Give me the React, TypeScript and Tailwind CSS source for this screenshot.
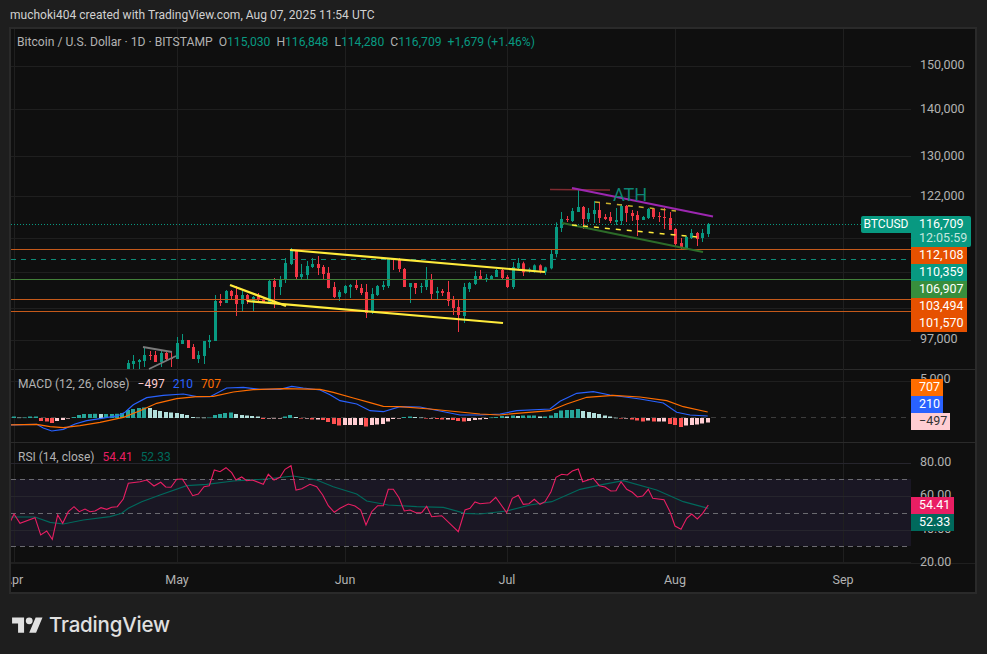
import * as React from "react"

type Candle = [number, number, number, number, number, "g" | "r"]

const UP = "#089981"
const DOWN = "#f23645"

// numbers read off 3x crops: [x, high, bodyTop, bodyBottom, low, colour]
const LEFT: Candle[] = [
  [385, 390, 399, 417, 417, "g"], [400, 375, 393, 402, 417, "g"], [418, 387, 390, 396, 417, "g"], [433, 352, 375, 393, 411, "g"],
  [451, 363, 375, 378, 390, "r"], [466, 363, 375, 396, 396, "r"], [484, 360, 369, 396, 411, "g"], [499, 363, 369, 387, 393, "r"],
  [514, 363, 384, 387, 411, "r"], [532, 321, 339, 387, 387, "g"], [547, 312, 330, 342, 342, "g"], [565, 330, 330, 354, 354, "r"],
  [580, 342, 351, 387, 387, "r"], [595, 363, 375, 387, 399, "g"], [613, 333, 333, 378, 402, "g"], [628, 315, 330, 336, 354, "g"],
  [646, 195, 213, 333, 333, "g"], [661, 192, 213, 219, 228, "r"], [679, 180, 183, 219, 219, "g"], [694, 180, 183, 198, 207, "r"],
  [709, 168, 195, 222, 258, "r"], [727, 180, 195, 222, 246, "g"], [742, 192, 195, 213, 222, "r"], [760, 198, 201, 213, 246, "g"],
  [775, 189, 198, 207, 213, "r"], [790, 204, 207, 216, 219, "r"], [808, 150, 153, 216, 216, "g"], [823, 144, 153, 171, 234, "r"],
  [841, 138, 150, 171, 195, "g"], [856, 84, 99, 150, 159, "g"], [874, 54, 60, 102, 105, "g"], [889, 60, 63, 141, 148, "r"],
  [904, 102, 132, 141, 148, "g"], [922, 93, 108, 135, 148, "g"], [937, 84, 102, 111, 114, "g"], [955, 78, 102, 114, 135, "r"],
]

const MIDDLE: Candle[] = [
  [10, 105, 111, 132, 148, "r"], [25, 111, 129, 174, 175, "r"], [43, 156, 171, 201, 204, "r"], [58, 180, 186, 201, 213, "g"],
  [76, 165, 168, 189, 192, "g"], [91, 162, 165, 171, 204, "g"], [109, 150, 165, 174, 180, "r"], [124, 162, 174, 189, 195, "r"],
  [139, 162, 186, 249, 264, "r"], [157, 174, 192, 246, 252, "g"], [172, 165, 168, 195, 198, "g"], [190, 153, 165, 171, 180, "g"],
  [205, 84, 84, 168, 174, "g"], [220, 84, 84, 90, 120, "r"], [238, 84, 87, 117, 126, "r"], [253, 114, 117, 171, 171, "r"],
  [271, 159, 159, 171, 219, "g"], [286, 159, 159, 174, 192, "r"], [304, 159, 168, 171, 189, "g"], [319, 111, 150, 171, 180, "g"],
  [334, 132, 150, 192, 207, "r"], [352, 171, 183, 189, 207, "g"], [367, 177, 183, 189, 198, "r"], [385, 153, 186, 213, 228, "r"],
  [400, 198, 207, 234, 255, "r"], [415, 210, 231, 255, 306, "r"], [433, 159, 171, 258, 279, "g"], [448, 156, 159, 177, 186, "g"],
  [466, 123, 138, 162, 165, "g"], [481, 120, 138, 150, 150, "r"], [499, 132, 144, 147, 156, "g"], [514, 135, 138, 147, 150, "g"],
  [529, 117, 120, 141, 141, "g"], [547, 114, 120, 144, 150, "r"], [562, 135, 141, 171, 174, "r"], [580, 96, 111, 171, 177, "g"],
  [595, 84, 99, 114, 120, "g"],
]

const RIGHT: Candle[] = [
  [10, 275, 280, 307, 318, "r"], [28, 293, 298, 302, 308, "g"], [43, 283, 286, 302, 308, "g"], [61, 283, 286, 302, 310, "r"],
  [76, 290, 292, 305, 315, "g"], [94, 240, 252, 295, 298, "g"], [109, 157, 171, 252, 262, "g"], [124, 126, 147, 174, 186, "g"],
  [142, 138, 147, 150, 156, "r"], [157, 114, 123, 153, 156, "g"], [175, 57, 111, 126, 126, "g"], [190, 108, 111, 147, 177, "r"],
  [205, 114, 129, 147, 156, "g"], [223, 93, 120, 132, 159, "g"], [238, 96, 120, 144, 159, "r"], [256, 132, 141, 147, 150, "r"],
  [271, 126, 141, 153, 159, "r"], [289, 114, 150, 156, 165, "g"], [304, 102, 108, 153, 165, "g"], [319, 105, 108, 129, 156, "r"],
  [337, 120, 129, 138, 153, "r"], [352, 123, 135, 150, 198, "r"], [370, 138, 141, 150, 150, "g"], [385, 114, 117, 144, 147, "g"],
  [400, 114, 117, 141, 147, "r"], [418, 126, 138, 141, 156, "r"], [433, 114, 141, 144, 177, "r"], [451, 126, 144, 180, 180, "r"],
  [466, 174, 177, 222, 228, "r"], [484, 204, 219, 234, 237, "r"], [499, 198, 201, 234, 240, "g"], [514, 177, 189, 204, 207, "g"],
  [532, 186, 189, 207, 228, "r"], [547, 177, 189, 204, 216, "g"], [565, 159, 162, 192, 201, "g"],
]

const HIST = [
  1.5, 0.5, 0.5, 1.5, 1.5, -3, -3.5, -5, -3, -2, -0.5, 1, 3, 4, 4, 4.2, 4, 4, 4, 4.2, 5, 8, 9, 10, 10.5, 10, 8, 7, 6, 5.5, 5, 4, 3, 1, 0.5, 0.4, 0.5,
  3, 4, 5, 5.5, 4, 3, 2.5, 2, 1.5, -1, -0.5, -0.5, -0.5, 1.5, 3, 1, -0.5, -0.5, -1.5, -1.5, -2, -4, -6, -7.5, -7, -7, -7, -7, -8.5, -7, -6.5, -6, -3.5, -1, -0.5,
  1, 1.5, 1, 0.5, -0.5, -0.5, -1, -1.5, -1.5, -2, -3, -3.5, -3, -2, -1.5, -1, 0.5, 1,
  2, 1.5, 2.5, 2, 2.5, 2.5, 2.5, 1.5, 1.5, 2.5, 5, 7.5, 8, 8, 9, 7, 6, 5, 4, 2.5, 1.5, 0.3, -0.5, -0.5, -1.5, -2.5, -3.5, -2.5, -3.5, -3.5, -3.5, -6, -7, -9, -7.5, -7, -6.5, -5.5, -4.5,
]

const pts = (list: number[][], ox: number, oy: number) =>
  list.map(([x, y]) => `${(ox + x / 3).toFixed(1)},${(oy + y / 3).toFixed(1)}`).join(" ")

const MACD_BLUE =
  pts([[30, 183], [110, 181], [130, 192], [155, 201], [190, 196], [225, 180], [260, 170], [300, 164], [355, 155], [375, 145], [400, 122], [440, 101], [490, 94], [550, 90], [590, 98], [630, 98], [680, 72], [730, 70], [780, 76], [840, 76], [875, 67], [910, 72], [960, 78], [990, 92], [1020, 110], [1070, 120], [1110, 140], [1150, 143], [1200, 128]], 0, 365) +
  " 420,408 440,412 460,416 480,416 " +
  pts([[0, 150], [50, 140], [150, 135], [180, 112], [230, 88], [280, 83], [330, 93], [420, 105], [490, 117], [530, 145], [570, 153], [623, 156]], 500, 365)

const MACD_ORANGE =
  pts([[30, 183], [110, 181], [150, 188], [190, 191], [240, 185], [300, 175], [370, 160], [420, 140], [470, 118], [530, 104], [590, 98], [640, 97], [700, 84], [760, 77], [850, 74], [960, 76], [1000, 85], [1060, 102], [1110, 116], [1150, 127], [1200, 128]], 0, 365) +
  " 430,410 460,413 480,415 " +
  pts([[0, 153], [50, 148], [150, 140], [200, 120], [260, 100], [340, 94], [420, 99], [500, 110], [550, 128], [623, 144]], 500, 365)

const RSI_PINK =
  pts([[30, 232], [42, 207], [60, 235], [105, 218], [122, 270], [140, 258], [157, 283], [173, 210], [188, 235], [205, 200], [222, 185], [238, 200], [255, 192], [270, 200], [285, 198], [303, 188], [320, 193], [335, 187], [352, 185], [370, 162], [385, 115], [420, 110], [440, 105], [462, 123], [482, 112], [497, 126], [513, 127], [530, 103], [547, 102], [562, 125], [578, 152], [595, 147], [612, 125], [628, 122], [643, 75], [660, 80], [678, 68], [695, 83], [708, 105], [725, 96], [740, 107], [757, 105], [790, 118], [805, 88], [822, 105], [840, 97], [855, 73], [873, 62], [888, 135], [905, 131], [930, 118], [950, 125], [968, 150], [985, 182], [1003, 202], [1020, 190], [1045, 177], [1065, 183], [1082, 195], [1098, 240], [1115, 200], [1133, 182], [1150, 182], [1165, 133], [1180, 133], [1197, 158], [1213, 198], [1230, 195], [1248, 203], [1265, 203], [1280, 184], [1295, 215], [1325, 212], [1375, 260], [1395, 195], [1410, 190], [1425, 171], [1440, 176]], 0, 445) +
  " " +
  pts([[30, 173], [47, 157], [80, 203], [97, 160], [115, 151], [130, 178], [147, 176], [163, 163], [180, 178], [195, 170], [213, 140], [228, 97], [245, 88], [262, 90], [277, 78], [295, 72], [308, 110], [340, 100], [358, 122], [375, 126], [392, 138], [408, 137], [423, 110], [440, 133], [457, 142], [472, 156], [488, 153], [505, 133], [518, 160], [552, 164], [570, 200], [585, 243], [603, 253], [620, 220], [635, 207], [652, 222], [668, 205], [685, 180]], 480, 445)

const RSI_GREEN =
  pts([[30, 216], [105, 216], [150, 232], [190, 237], [250, 225], [330, 215], [365, 205], [385, 190], [425, 170], [480, 150], [560, 122], [620, 118], [700, 108], [800, 102], [880, 93], [950, 105], [1000, 125], [1070, 147], [1100, 168], [1165, 180], [1250, 185], [1330, 187], [1395, 205], [1440, 207]], 0, 445) +
  " " +
  pts([[80, 198], [150, 180], [215, 170], [300, 133], [370, 118], [430, 107], [530, 135], [610, 170], [685, 190]], 480, 445)

function Candles({ data, ox, oy }: { data: Candle[]; ox: number; oy: number }) {
  return (
    <>
      {data.map(([x, h, t, b, l, c]) => {
        const px = Math.round(ox + x / 3) + 0.5
        const fill = c === "g" ? UP : DOWN
        return (
          <g key={x} fill={fill}>
            <rect x={px - 0.5} y={oy + h / 3} width={1} height={(l - h) / 3} />
            <rect x={px - 1.5} y={oy + t / 3} width={3} height={Math.max((b - t) / 3, 1)} />
          </g>
        )
      })}
    </>
  )
}

// vertical time grid, shared by the three panes
function TimeGrid({ y1, y2 }: { y1: number; y2: number }) {
  return (
    <>
      {[14.5, 177.5, 345.5, 507.5, 675.5, 843.5].map((x) => (
        <line key={x} x1={x} x2={x} y1={y1} y2={y2} stroke="#1f1f1f" />
      ))}
    </>
  )
}

function HLines({ ys, color = "#1f1f1f" }: { ys: number[]; color?: string }) {
  return (
    <>
      {ys.map((y) => (
        <line key={y} x1={11} x2={911} y1={y} y2={y} stroke={color} />
      ))}
    </>
  )
}

function Tag({ className, children }: { className: string; children: React.ReactNode }) {
  return <div className={`h-[17px] flex items-center pl-[8px] text-[12.5px] leading-none ${className}`}>{children}</div>
}

export default function App() {
  return (
    <div className="w-[987px] h-[654px] bg-[#1e1e1e] flex flex-col overflow-hidden font-['Roboto',sans-serif]">
      <div className="h-[27px] shrink-0 pl-[10px] pt-[7px] text-[12px] leading-4 tracking-[0.02px] text-[#d1d1d1]">
        muchoki404 created with TradingView.com, Aug 07, 2025 11:54 UTC
      </div>

      <div className="ml-[9px] w-[968px] h-[567px] shrink-0 border-2 border-[#2a2a2a] bg-[#0f0f0f] flex flex-col">
        {/* Main pane */}
        <div className="h-[341px] shrink-0 flex border-b border-[#2a2a2a]">
          <div className="relative w-[900px] shrink-0">
            <svg className="absolute inset-0" width={900} height={341} viewBox="11 29 900 341">
              <TimeGrid y1={29} y2={370} />
              <HLines ys={[66.5, 109.5, 156.5, 196.5, 238.5, 272.5, 308.5, 340.5]} />
              <Candles data={LEFT} ox={0} oy={230} />
              <Candles data={MIDDLE} ox={320} oy={230} />
              <Candles data={RIGHT} ox={520} oy={170} />

              <line x1={11} x2={861} y1={224.5} y2={224.5} stroke={UP} strokeDasharray="1 2" />
              <line x1={11} x2={911} y1={249.5} y2={249.5} stroke="#c4591a" />
              <line x1={11} x2={911} y1={259.5} y2={259.5} stroke="#0e8a78" strokeDasharray="5 5" />
              <line x1={11} x2={911} y1={279.5} y2={279.5} stroke="#43803a" />
              <line x1={11} x2={911} y1={299.5} y2={299.5} stroke="#c4591a" />
              <line x1={11} x2={911} y1={311.5} y2={311.5} stroke="#c4591a" />

              <line x1={143} y1={347} x2={172} y2={352} stroke="#7a7a7a" strokeWidth={1.8} />
              <line x1={149} y1={369} x2={176} y2={356} stroke="#7a7a7a" strokeWidth={1.8} />

              <line x1={230} y1={285} x2={286} y2={306} stroke="#ffeb3b" strokeWidth={2.2} />
              <line x1={247} y1={301} x2={503} y2={323} stroke="#ffeb3b" strokeWidth={2.2} />
              <line x1={290} y1={250} x2={545} y2={272} stroke="#ffeb3b" strokeWidth={2.2} />

              <line x1={550} y1={189.5} x2={610} y2={190} stroke="#7f2a30" strokeWidth={1.5} />
              <line x1={572} y1={188} x2={713} y2={216.5} stroke="#9c27b0" strokeWidth={2} />
              <line x1={562} y1={223} x2={703} y2={252} stroke="#2c6b28" strokeWidth={2} />
              <line x1={595} y1={202} x2={676} y2={211} stroke="#c9b12c" strokeWidth={1.5} strokeDasharray="5 6" />
              <line x1={572} y1={225} x2={697} y2={237} stroke="#ffeb3b" strokeWidth={1.5} strokeDasharray="5 6" />
              <text x={613} y={201} fontSize={18} fill="#0d8574">ATH</text>
            </svg>
            <div className="absolute left-[6px] top-[5px] flex text-[12.15px] leading-4 whitespace-pre text-[#b2b2b2]">
              <span>Bitcoin / U.S. Dollar · 1D · BITSTAMP  O</span>
              <span className="text-[#089981]">115,030</span>
              <span>  H</span>
              <span className="text-[#089981]">116,848</span>
              <span>  L</span>
              <span className="text-[#089981]">114,280</span>
              <span>  C</span>
              <span className="text-[#089981]">116,709  +1,679 (+1.46%)</span>
            </div>
            <div className="absolute right-0 top-[187px] h-[17px] w-[50px] rounded-l-[2px] bg-[#089981] text-white text-[12px] leading-[17px] text-center">
              BTCUSD
            </div>
          </div>
          <div className="flex-1 flex flex-col pt-[30px] text-[12.5px] leading-3 text-[#b2b2b2]">
            <div className="h-[44px] pl-[9px]">150,000</div>
            <div className="h-[47px] pl-[9px]">140,000</div>
            <div className="h-[40px] pl-[9px]">130,000</div>
            <div className="h-[26px] pl-[9px]">122,000</div>
            <div className="w-[60px] h-[31px] bg-[#089981] rounded-r-[2px] pl-[8px] pt-[1px] leading-[14px] text-white">
              <div>116,709</div>
              <div className="text-[#c4e6df]">12:05:59</div>
            </div>
            <div className="w-[56px] flex flex-col text-white">
              <Tag className="bg-[#e65100]">112,108</Tag>
              <Tag className="bg-[#089981]">110,359</Tag>
              <Tag className="bg-[#388e3c]">106,907</Tag>
              <Tag className="bg-[#e65100]">103,494</Tag>
              <Tag className="bg-[#e65100]">101,570</Tag>
            </div>
            <div className="pl-[9px] pt-[1px]">97,000</div>
          </div>
        </div>

        {/* MACD pane */}
        <div className="h-[73px] shrink-0 flex border-b border-[#2a2a2a]">
          <div className="relative w-[900px] shrink-0">
            <svg className="absolute inset-0" width={900} height={72} viewBox="11 371 900 72">
              <TimeGrid y1={371} y2={443} />
              <HLines ys={[382.5]} />
              <line x1={11} x2={911} y1={418.5} y2={418.5} stroke="#3c3c3c" strokeDasharray="5 5" />
              {HIST.map((v, i) => {
                const prev = i > 0 ? HIST[i - 1] : v
                const fill = v >= 0 ? (v >= prev ? "#26a69a" : "#b2dfdb") : v < prev ? "#ff5252" : "#ffcdd2"
                return (
                  <rect
                    key={i}
                    x={Math.round(14 + 5.42 * i) - 2}
                    y={v >= 0 ? 419 - v : 419}
                    width={4}
                    height={Math.max(Math.abs(v), 0.6)}
                    fill={fill}
                  />
                )
              })}
              <polyline points={MACD_BLUE} fill="none" stroke="#2962ff" strokeWidth={1.2} />
              <polyline points={MACD_ORANGE} fill="none" stroke="#ff6d00" strokeWidth={1.2} />
            </svg>
            <div className="absolute left-[7px] top-[6px] flex gap-[8px] text-[12px] leading-4 text-[#b2b2b2]">
              <span>MACD (12, 26, close)</span>
              <span className="text-[#ffcdd2]">−497</span>
              <span className="text-[#2962ff]">210</span>
              <span className="text-[#ff6d00]">707</span>
            </div>
          </div>
          <div className="relative flex-1 flex flex-col items-start pt-[9px] text-white">
            <span className="absolute left-[9px] top-[3px] text-[12.5px] leading-3 text-[#b2b2b2]">5,000</span>
            <Tag className="relative w-[32px] bg-[#ff6d00]">707</Tag>
            <Tag className="w-[32px] bg-[#2962ff]">210</Tag>
            <Tag className="w-[39px] bg-[#ffcdd2] text-[#333333]">−497</Tag>
          </div>
        </div>

        {/* RSI pane */}
        <div className="h-[121px] shrink-0 flex border-b border-[#1f1f1f]">
          <div className="relative w-[900px] shrink-0">
            <svg className="absolute inset-0" width={900} height={121} viewBox="11 443 900 121">
              <rect x={11} y={479} width={900} height={67} fill="#1a1724" />
              <TimeGrid y1={443} y2={566} />
              <HLines ys={[463.5, 496.5, 530.5]} color="#26252d" />
              <HLines ys={[562.5]} />
              <line x1={11} x2={911} y1={479.5} y2={479.5} stroke="#6a6a70" strokeDasharray="5 4" />
              <line x1={11} x2={911} y1={513.5} y2={513.5} stroke="#6a6a70" strokeDasharray="5 4" />
              <line x1={11} x2={911} y1={546.5} y2={546.5} stroke="#6a6a70" strokeDasharray="5 4" />
              <polyline points={RSI_GREEN} fill="none" stroke="#00695c" strokeWidth={1.2} />
              <polyline points={RSI_PINK} fill="none" stroke="#e91e63" strokeWidth={1.1} />
            </svg>
            <div className="absolute left-[7px] top-[6px] flex gap-[8px] text-[12px] leading-4 text-[#b2b2b2]">
              <span>RSI (14, close)</span>
              <span className="text-[#e91e63]">54.41</span>
              <span className="text-[#00695c]">52.33</span>
            </div>
          </div>
          <div className="relative flex-1 h-[125px] flex flex-col pt-[13px] pl-[9px] text-[12.5px] leading-3 text-[#b2b2b2]">
            <div className="h-[33px] shrink-0">80.00</div>
            <div className="h-[34px] shrink-0">60.00</div>
            <div className="h-[33px] shrink-0">40.00</div>
            <div className="shrink-0">20.00</div>
            <div className="absolute left-0 top-[54px] w-[43px] flex flex-col text-white">
              <Tag className="bg-[#e91e63]">54.41</Tag>
              <Tag className="bg-[#00695c]">52.33</Tag>
            </div>
          </div>
        </div>

        {/* Time axis */}
        <div className="flex-1 overflow-hidden flex pt-[10px] text-[12.5px] leading-none text-[#b2b2b2] text-center">
          <div className="w-[163px] shrink-0 -ml-[79px]">Apr</div>
          <div className="w-[164px] shrink-0">May</div>
          <div className="w-[172px] shrink-0">Jun</div>
          <div className="w-[152px] shrink-0">Jul</div>
          <div className="w-[184px] shrink-0">Aug</div>
          <div className="w-[152px] shrink-0">Sep</div>
        </div>
      </div>

      {/* Footer logo */}
      <div className="flex-1 flex items-center gap-[6px] pl-[12px] pt-[3px]">
        <svg width={31} height={24} viewBox="0 0 36 28" fill="#e0e0e0">
          <path d="M14 22H7V11H0V4h14v18ZM28 22h-8l7.5-18h8L28 22Z" />
          <circle cx={20} cy={8} r={4} />
        </svg>
        <span className="text-[20.5px] leading-none font-medium tracking-[-0.2px] text-[#e0e0e0] font-['Inter',sans-serif]">TradingView</span>
      </div>
    </div>
  )
}
